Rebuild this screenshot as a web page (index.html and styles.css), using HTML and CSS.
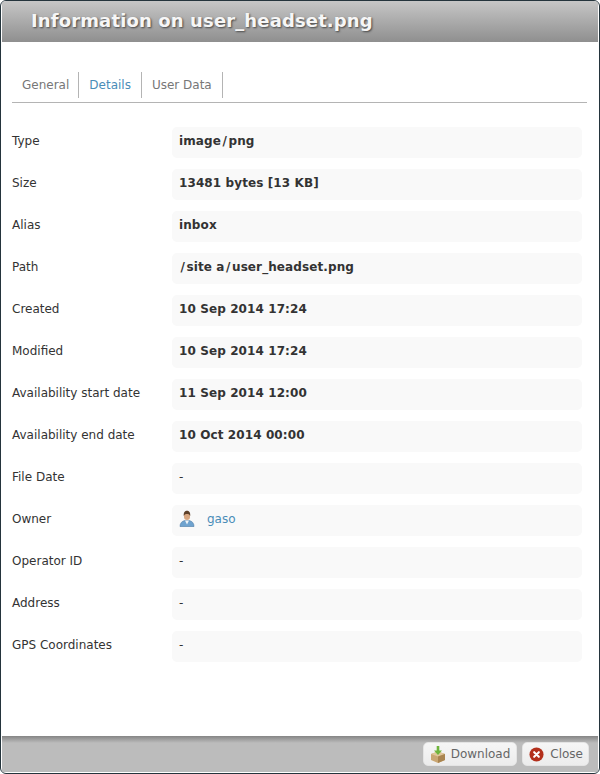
FILE: index.html
```html
<!DOCTYPE html>
<html lang="en">
<head>
<meta charset="utf-8">
<title>Information on user_headset.png</title>
<link rel="stylesheet" href="styles.css">
</head>
<body>
<div class="dialog">
  <header class="titlebar"><h1>Information on user_headset.png</h1></header>
  <main class="content">
    <nav class="tabs">
      <a class="tab">General</a>
      <a class="tab active">Details</a>
      <a class="tab">User Data</a>
    </nav>
    <dl class="props">
      <div class="row"><dt>Type</dt><dd><span>image<span class="sl">/</span>png</span></dd></div>
      <div class="row"><dt>Size</dt><dd>13481 bytes [13 KB]</dd></div>
      <div class="row"><dt>Alias</dt><dd>inbox</dd></div>
      <div class="row"><dt>Path</dt><dd><span><span class="sl">/</span>site a<span class="sl">/</span>user_headset.png</span></dd></div>
      <div class="row"><dt>Created</dt><dd>10 Sep 2014 17:24</dd></div>
      <div class="row"><dt>Modified</dt><dd>10 Sep 2014 17:24</dd></div>
      <div class="row"><dt>Availability start date</dt><dd>11 Sep 2014 12:00</dd></div>
      <div class="row"><dt>Availability end date</dt><dd>10 Oct 2014 00:00</dd></div>
      <div class="row"><dt>File Date</dt><dd class="plain">-</dd></div>
      <div class="row"><dt>Owner</dt><dd class="plain owner">
        <svg class="user" viewBox="0 0 16 17" width="16" height="17" aria-hidden="true">
          <path d="M1 16.500c0-3.500 2-5.500 5-6h4c3 .5 5 2.500 5 6z" fill="#6fa3cf" stroke="#4a7ba6" stroke-width=".6"/>
          <path d="M6 10.500h4L8 14.500z" fill="#f2f5f7"/>
          <rect x="5" y="3" width="6" height="7" rx="3" fill="#d8a680"/>
          <path d="M4.800 6C4.300 2.500 6 .8 8 .8s3.700 1.700 3.200 5.200C10.500 4.300 9 4 8 4S5.500 4.300 4.800 6z" fill="#5e4029"/>
        </svg>
        <a class="link">gaso</a></dd></div>
      <div class="row"><dt>Operator ID</dt><dd class="plain">-</dd></div>
      <div class="row"><dt>Address</dt><dd class="plain">-</dd></div>
      <div class="row"><dt>GPS Coordinates</dt><dd class="plain">-</dd></div>
    </dl>
  </main>
  <footer class="footer">
    <button class="btn download" type="button">
      <svg viewBox="0 0 16 17" width="16" height="17" aria-hidden="true">
        <path d="M1 8l7-2.500L15 8v6l-7 3-7-3z" fill="#c9a673"/>
        <path d="M1 8l7 2.500L15 8l-7-2.500z" fill="#e0c79c"/>
        <path d="M8 10.500V17l7-3V8z" fill="#a9844f"/>
        <path d="M6.700 0h2.600v4.500H12L8 9 4 4.500h2.700z" fill="#6fb53c"/>
      </svg>
      Download</button>
    <button class="btn close" type="button">
      <svg viewBox="0 0 16 16" width="15" height="15" aria-hidden="true">
        <circle cx="8" cy="8" r="7.500" fill="#b3301c"/>
        <path d="M5.500 5.500l5 5M10.500 5.500l-5 5" stroke="#fff" stroke-width="2.200" stroke-linecap="round"/>
      </svg>
      Close</button>
  </footer>
</div>
</body>
</html>
```
FILE: styles.css
```css
* { box-sizing: border-box; }
html, body { margin: 0; height: 100%; background: #fff; }
body { font-family: "DejaVu Sans", Verdana, sans-serif; font-size: 12px; color: #333; }
.dialog {
  height: 774px; display: flex; flex-direction: column;
  border: 1px solid #24343c;
  padding: 0 1px 1px;
  border-radius: 6px;
  background: #fff;
  overflow: hidden;
}
.titlebar {
  height: 41px; flex: none; padding: 0 0 3px 29px; display: flex; align-items: center;
  background: linear-gradient(#c6c6c6, #8f8f8f);
}
.titlebar h1 {
  margin: 0; font-size: 18px; font-weight: bold; color: #f6f6f6;
  letter-spacing: .13px;
  text-shadow: 1px 1px 2px #444;
}
.content { flex: 1; padding: 30px 11px 0 10px; }
.tabs { display: flex; height: 31px; border-bottom: 1px solid #b4b4b4; }
.tab {
  display: flex; align-items: center; height: 26px; padding: 0 10px; color: #777;
  border-right: 1px solid #b4b4b4;
}
.tab:first-child { padding-right: 9px; }
.tabs .active { color: #4a8db8; }
.props { margin: 24px 0 0; display: flex; flex-direction: column; gap: 11px; }
.row { display: flex; height: 31px; align-items: center; }
dt { width: 160px; flex: none; height: 31px; padding-bottom: 4px; display: flex; align-items: center; color: #333; }
dd {
  margin: 0; width: 410px; height: 31px; padding: 0 7px 4px; display: flex; align-items: center;
  background: #f9f9f9; border-radius: 5px; font-weight: bold; font-size: 12px; letter-spacing: .1px; color: #333;
}
dd.plain { font-weight: normal; letter-spacing: 0; }
.sl { margin: 0 1.5px; }
.owner { gap: 12px; }
.link { color: #4a8db8; }
.footer {
  height: 36px; flex: none; display: flex; justify-content: flex-end; align-items: center; gap: 5px; padding: 0 9px 0 0;
  background: linear-gradient(#858585, #bcbcbc 7px);
}
.btn {
  height: 24px; display: flex; align-items: center;
  font: 12px "DejaVu Sans", Verdana, sans-serif; color: #666;
  background: linear-gradient(#f6f6f6, #ececec); border: 1px solid #e4e4e4; border-radius: 5px;
}
.download { padding: 0 6px; gap: 5px; }
.close { padding: 0 5px 0 6px; gap: 6px; }
```
